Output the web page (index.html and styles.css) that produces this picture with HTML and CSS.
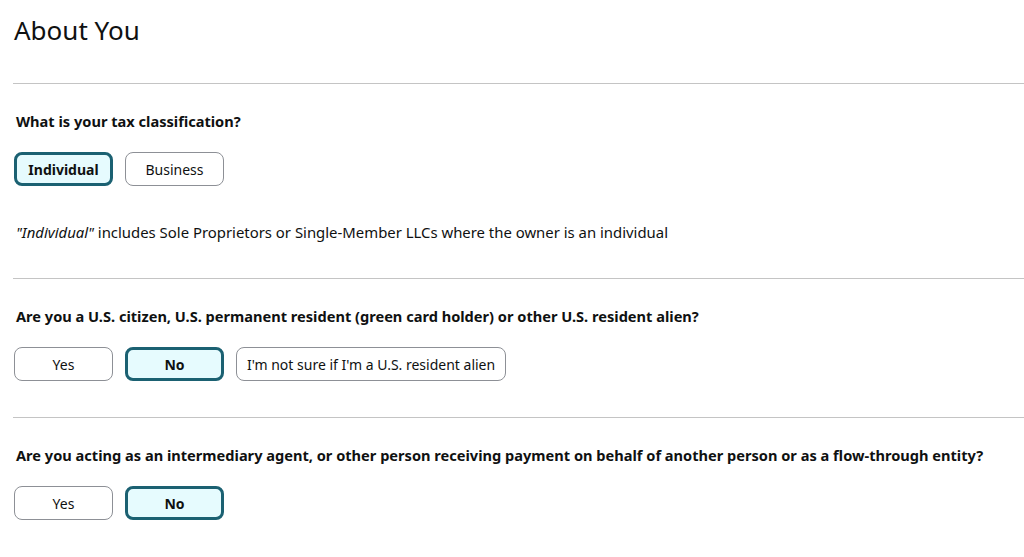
FILE: index.html
```html
<!DOCTYPE html>
<html>
<head>
<meta charset="utf-8">
<link rel="stylesheet" href="styles.css">
</head>
<body>
<div class="page">
  <h1 class="title">About You</h1>
  <section class="section">
    <div class="question">What is your tax classification?</div>
    <div class="options">
      <button class="opt selected">Individual</button>
      <button class="opt">Business</button>
    </div>
    <p class="note"><em>"Individual"</em> includes Sole Proprietors or Single-Member LLCs where the owner is an individual</p>
  </section>
  <section class="section">
    <div class="question">Are you a U.S. citizen, U.S. permanent resident (green card holder) or other U.S. resident alien?</div>
    <div class="options">
      <button class="opt">Yes</button>
      <button class="opt selected">No</button>
      <button class="opt">I'm not sure if I'm a U.S. resident alien</button>
    </div>
  </section>
  <section class="section last">
    <div class="question">Are you acting as an intermediary agent, or other person receiving payment on behalf of another person or as a flow-through entity?</div>
    <div class="options">
      <button class="opt">Yes</button>
      <button class="opt selected">No</button>
    </div>
  </section>
</div>
</body>
</html>
```
FILE: styles.css
```css
html, body {
  margin: 0;
  padding: 0;
  background: #ffffff;
}
body {
  font-family: "Noto Sans", "Open Sans", sans-serif;
  color: #0f1111;
}
.page {
  padding: 0 0 0 13px;
}
.title {
  margin: 0;
  padding: 12px 0 0 1px;
  height: 83px;
  box-sizing: border-box;
  font-size: 26px;
  font-weight: 400;
  line-height: 36px;
}
.section {
  border-top: 1px solid #c4c4c4;
  padding: 27px 0 36px 3px;
}
.section.last {
  padding-bottom: 40px;
}
.question {
  font-size: 14.6px;
  font-weight: 700;
  line-height: 20px;
  height: 20px;
  margin-bottom: 21px;
  white-space: nowrap;
}
.options {
  display: flex;
  gap: 12px;
  margin-left: -2px;
}
.opt {
  box-sizing: border-box;
  min-width: 99px;
  height: 34px;
  padding: 0 10px;
  border: 1px solid #8d9096;
  border-radius: 8px;
  background: #ffffff;
  font-family: inherit;
  font-size: 14px;
  color: #0f1111;
  cursor: pointer;
}
.opt.selected {
  border: 3px solid #1b6172;
  background: #e6fbfe;
  font-weight: 700;
}
.note {
  margin: 36px 0 0;
  font-size: 14.9px;
  line-height: 20px;
}
.note em {
  font-style: italic;
}
```
